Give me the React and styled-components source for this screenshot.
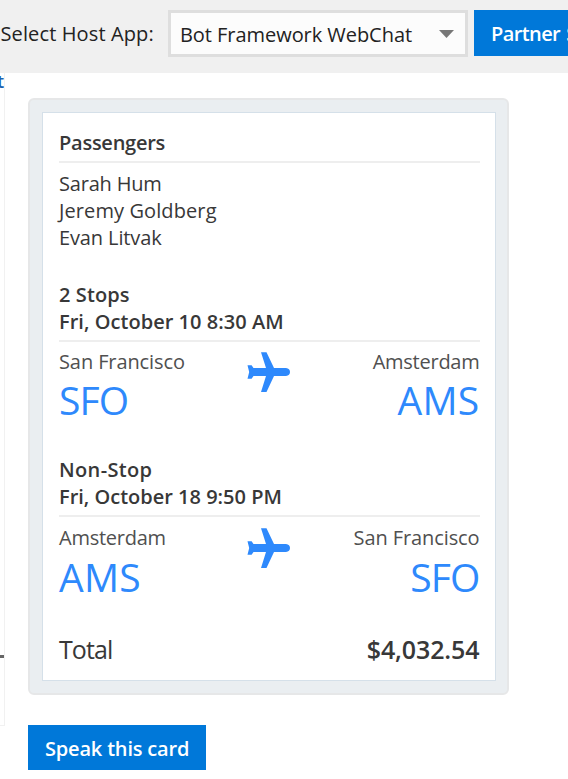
import React from "react";
import styled, { createGlobalStyle } from "styled-components";

const GlobalStyle = createGlobalStyle`
  * { box-sizing: border-box; }
  body {
    margin: 0;
    overflow: hidden;
    background: #fff;
    color: #383838;
    font: 370 20px/27px "Open Sans", "Noto Sans", sans-serif;
    white-space: nowrap;
  }
`;

const Page = styled.div`
  width: 100%;
  height: 779px;
  overflow: hidden;
`;

const Toolbar = styled.header`
  display: flex;
  align-items: flex-start;
  height: 73px;
  padding-top: 10px;
  overflow: hidden;
  background: #f0f0f0;
`;

const HostLabel = styled.label`
  flex: none;
  width: 168px;
  padding: 10px 0 0 0.5px;
  color: #222;
  letter-spacing: 0.12px;
`;

const HostSelect = styled.div`
  display: flex;
  flex: none;
  align-items: center;
  justify-content: space-between;
  width: 300px;
  height: 47px;
  margin-right: 6px;
  padding: 1px 11px 0 9px;
  border: 3px solid #dedede;
  background: #fcfcfc;
  color: #222;
  letter-spacing: -0.05px;
`;

const Button = styled.button`
  flex: none;
  width: ${(p) => p.$width};
  height: ${(p) => p.$height};
  padding: ${(p) => p.$drop || "0"} 0 0 17px;
  border: 0;
  background: #0078d9;
  color: #fff;
  font: inherit;
  font-weight: 650;
  letter-spacing: ${(p) => p.$tracking};
  word-spacing: ${(p) => p.$wordGap || "0"};
  text-align: left;
`;

const Body = styled.main`
  display: flex;
`;

const SidePane = styled.aside`
  flex: none;
  width: 5px;
  height: 653px;
  border-right: 1px solid #f1f1f1;
  border-bottom: 1px solid #f1f1f1;
  overflow: hidden;
`;

const PaneLink = styled.div`
  display: flex;
  justify-content: flex-end;
  height: 16px;
  color: #1c62b0;
  font-size: 18px;
  font-weight: 600;
  line-height: 16px;
`;

const PaneRule = styled.div`
  height: 3px;
  margin-top: 566px;
  background: #666;
`;

const Content = styled.section`
  padding: 25px 0 0 23px;
`;

const CardFrame = styled.div`
  width: 481px;
  height: 597px;
  margin-bottom: 30px;
  padding: 12px;
  border: 2px solid #e6e7e8;
  border-radius: 6px;
  background: #eaeef1;
`;

const Card = styled.article`
  width: 454px;
  height: 569px;
  padding: 16px 15.5px 0 16px;
  border: 1px solid #d5e0e9;
  background: #fff;
`;

const Section = styled.section`
  margin-bottom: ${(p) => p.$gap || "0"};
`;

const Heading = styled.div`
  padding-bottom: 5px;
  border-bottom: 2px solid #eee;
  margin-bottom: ${(p) => p.$after || "7px"};
  font-weight: 540;
`;

const Line = styled.div`
  letter-spacing: ${(p) => p.$tracking || "0"};
`;

const Route = styled.div`
  display: grid;
  grid-template-columns: 1fr 43px 1fr;
`;

const Stop = styled.div`
  text-align: ${(p) => p.$align || "left"};
  color: #505050;
`;

const Code = styled.div`
  color: #2e89fc;
  font-size: 39px;
  font-weight: 385;
  line-height: ${(p) => p.$height || "50px"};
  letter-spacing: ${(p) => p.$tracking};
`;

const Plane = styled.svg`
  display: block;
  width: 44px;
  height: 41px;
  margin: 4px 0 0 -0.5px;
  fill: #2e89fc;
`;

const TotalRow = styled.div`
  display: flex;
  justify-content: space-between;
  font-size: 25px;
  line-height: 34px;
`;

const TotalLabel = styled.span`
  letter-spacing: -0.9px;
`;

const Price = styled.span`
  font-weight: 540;
  letter-spacing: -0.1px;
`;

const tracking = {
  "San Francisco": "-0.1px",
  Amsterdam: "-0.25px",
  SFO: "-0.9px",
  AMS: "0.3px",
};

function Airport({ city, code, align, codeHeight }) {
  return (
    <Stop $align={align}>
      <Line $tracking={tracking[city]}>{city}</Line>
      <Code $tracking={tracking[code]} $height={codeHeight}>{code}</Code>
    </Stop>
  );
}

function PlaneIcon() {
  return (
    <Plane viewBox="0 0 44 41" aria-hidden="true">
      <path d="M14 .3H19.5L27 16H39Q43 16.6 43 20T39 24H27L19.5 40H14L19 24H6.5L4.6 26.7H.5L2.2 20 .5 13.3H4.6L6.5 16H19Z" />
    </Plane>
  );
}

export default function App() {
  return (
    <Page>
      <GlobalStyle />
      <Toolbar>
        <HostLabel>Select Host App:</HostLabel>
        <HostSelect>
          <span>Bot Framework WebChat</span>
          <svg width="15" height="8" viewBox="0 0 15 8" aria-hidden="true">
            <path d="M0 0H15L7.5 8Z" fill="#777" />
          </svg>
        </HostSelect>
        <Button $width="160px" $height="46px" $tracking="-0.6px" $wordGap="1.5px">Partner Site</Button>
      </Toolbar>
      <Body>
        <SidePane>
          <PaneLink>t</PaneLink>
          <PaneRule />
        </SidePane>
        <Content>
          <CardFrame>
            <Card>
              <Section $gap="30px">
                <Heading>
                  <Line $tracking="-0.25px">Passengers</Line>
                </Heading>
                <Line $tracking="-0.2px">Sarah Hum</Line>
                <Line $tracking="0.1px">Jeremy Goldberg</Line>
                <Line $tracking="-0.12px">Evan Litvak</Line>
              </Section>
              <Section $gap="31px">
                <Heading $after="6px">
                  <Line $tracking="0.1px">2 Stops</Line>
                  <Line $tracking="0.04px">Fri, October 10 8:30 AM</Line>
                </Heading>
                <Route>
                  <Airport city="San Francisco" code="SFO" />
                  <PlaneIcon />
                  <Airport city="Amsterdam" code="AMS" align="right" />
                </Route>
              </Section>
              <Section $gap="29px">
                <Heading>
                  <Line $tracking="0.35px">Non-Stop</Line>
                  <Line>Fri, October 18 9:50 PM</Line>
                </Heading>
                <Route>
                  <Airport city="Amsterdam" code="AMS" codeHeight="52px" />
                  <PlaneIcon />
                  <Airport city="San Francisco" code="SFO" align="right" codeHeight="52px" />
                </Route>
              </Section>
              <TotalRow>
                <TotalLabel>Total</TotalLabel>
                <Price>$4,032.54</Price>
              </TotalRow>
            </Card>
          </CardFrame>
          <Button $width="178px" $height="45px" $tracking="-0.18px" $drop="2px">Speak this card</Button>
        </Content>
      </Body>
    </Page>
  );
}
